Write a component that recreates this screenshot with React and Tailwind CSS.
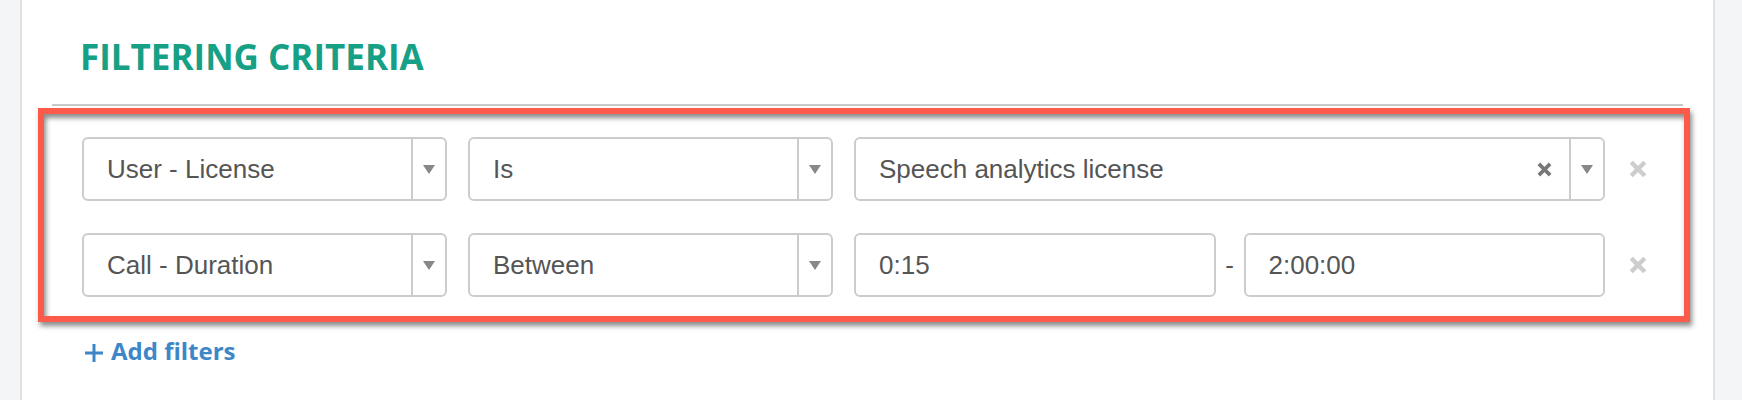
import React from 'react'

const SANS = { fontFamily: '"Liberation Sans", Arial, sans-serif' }

function Caret() {
  return (
    <svg width="12" height="9" viewBox="0 0 12 9">
      <path d="M0 0h12L6 9z" fill="#888888" />
    </svg>
  )
}

function Cross({ size, color, stroke }) {
  return (
    <svg width={size} height={size} viewBox="0 0 16 16">
      <path d="M2 2L14 14M14 2L2 14" stroke={color} strokeWidth={stroke} strokeLinecap="butt" fill="none" />
    </svg>
  )
}

function Select({ label }) {
  return (
    <div className="flex h-[64px] w-[365px] shrink-0 rounded-[6px] border-2 border-[#cccccc] bg-white">
      <div className="flex flex-1 items-center pl-[23px] text-[26px] text-[#555555]">{label}</div>
      <div className="flex w-[34px] items-center justify-center border-l-2 border-[#cccccc]">
        <Caret />
      </div>
    </div>
  )
}

function RemoveRow() {
  return (
    <button className="ml-[24px] flex items-center">
      <Cross size={18} color="#cdcdcd" stroke={4} />
    </button>
  )
}

export default function App() {
  return (
    <div className="flex h-[400px] overflow-hidden bg-[#f4f5f7]" style={SANS}>
      <div className="w-[20px] shrink-0" />
      <div className="w-[1695px] shrink-0 border-x-2 border-[#e0e1e3] bg-white px-[30px] pt-[39px]">
        <h2
          className="ml-[28px] text-[35px] font-bold leading-[35px] text-[#16a085]"
          style={{ fontFamily: '"Open Sans", sans-serif' }}
        >
          FILTERING CRITERIA
        </h2>

        <div className="mt-[30px] h-[2px] bg-[#c6c8ca]" />

        {/* highlighted filter rows */}
        <div className="-ml-[14px] -mr-[7px] mt-[2px] border-[6px] border-[#fc5a4b] pb-[19px] pl-[38px] pt-[23px] shadow-[2px_4px_5px_rgba(0,0,0,0.45),inset_2px_4px_5px_rgba(0,0,0,0.45)]">
          <div className="flex items-center gap-[21px]">
            <Select label="User - License" />
            <Select label="Is" />
            <div className="flex h-[64px] w-[751px] shrink-0 rounded-[6px] border-2 border-[#cccccc] bg-white">
              <div className="flex flex-1 items-center justify-between pl-[23px] pr-[17px] text-[26px] text-[#555555]">
                <span>Speech analytics license</span>
                <Cross size={15} color="#777777" stroke={3.8} />
              </div>
              <div className="flex w-[34px] items-center justify-center border-l-2 border-[#cccccc]">
                <Caret />
              </div>
            </div>
            <div className="-ml-[21px]">
              <RemoveRow />
            </div>
          </div>

          <div className="mt-[32px] flex items-center gap-[21px]">
            <Select label="Call - Duration" />
            <Select label="Between" />
            <div className="flex w-[751px] shrink-0 items-center">
              <div className="flex h-[64px] flex-1 items-center rounded-[6px] border-2 border-[#cccccc] pl-[23px] text-[26px] text-[#555555]">
                0:15
              </div>
              <div className="w-[28px] text-center text-[26px] text-[#555555]">-</div>
              <div className="flex h-[64px] flex-1 items-center rounded-[6px] border-2 border-[#cccccc] pl-[23px] text-[26px] text-[#555555]">
                2:00:00
              </div>
            </div>
            <div className="-ml-[21px]">
              <RemoveRow />
            </div>
          </div>
        </div>

        <button
          className="ml-[33px] mt-[12px] flex items-center gap-[8px] text-[24px] font-bold leading-[34px] text-[#3d87c9]"
          style={{ fontFamily: '"Open Sans", sans-serif' }}
        >
          <svg width="18" height="18" viewBox="0 0 18 18" className="mt-[3px]">
            <path d="M9 0v18M0 9h18" stroke="#3d87c9" strokeWidth="3" />
          </svg>
          Add filters
        </button>
      </div>
      <div className="flex-1" />
    </div>
  )
}
